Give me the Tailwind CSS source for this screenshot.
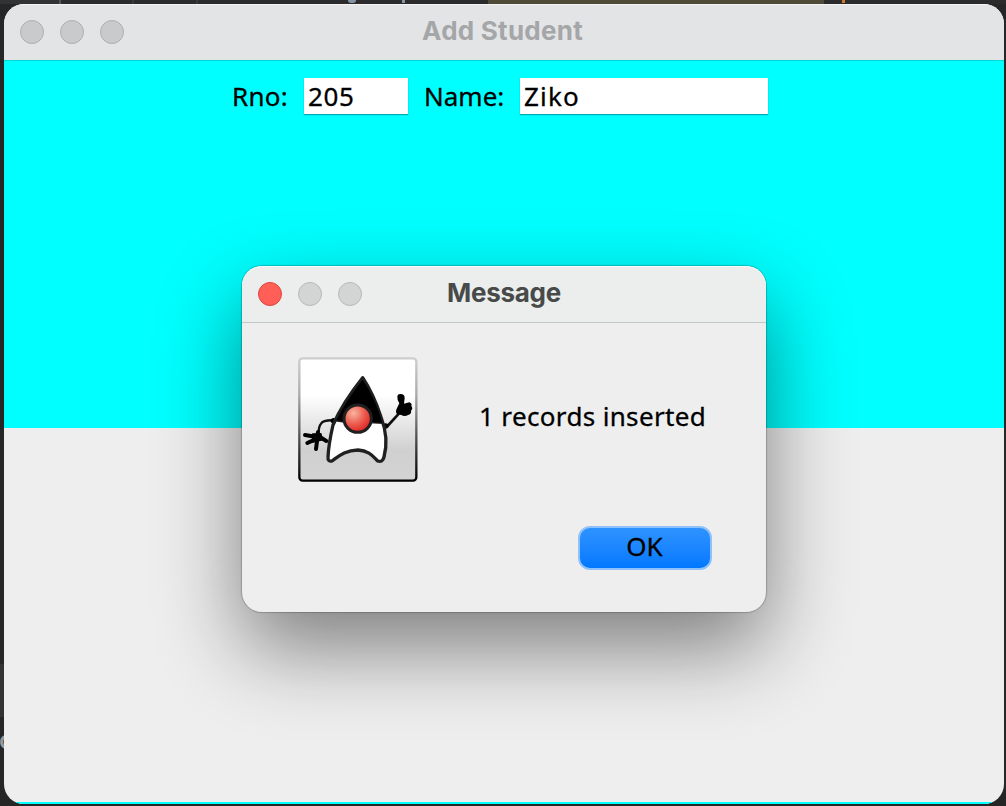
<!DOCTYPE html>
<html lang="en">
<head>
<meta charset="utf-8">
<title>Add Student</title>
<script src="https://cdn.jsdelivr.net/npm/@tailwindcss/browser@4"></script>
</head>
<body class="relative h-[806px] w-[1006px] overflow-hidden bg-[#262626] p-1 font-['Noto_Sans',sans-serif] text-[26px] leading-9 text-black">
  <!-- editor behind the window -->
  <div class="absolute left-0 top-0 flex h-1 w-full bg-[#2b2b2b]">
    <div class="w-[59px] bg-[#313335]"></div><div class="w-[2px] bg-[#555]"></div>
    <div class="w-[71px]"></div><div class="w-[2px] bg-[#393939]"></div>
    <div class="w-[62px]"></div><div class="w-[2px] bg-[#393939]"></div>
    <div class="w-[150px]"></div><div class="h-[3px] w-[8px] rounded-b bg-[#8494a4]"></div>
    <div class="w-[46px]"></div><div class="h-[3px] w-[3px] bg-[#8494a4]"></div>
    <div class="w-[83px]"></div><div class="w-[336px] bg-[#4d4a35]"></div>
    <div class="w-[18px]"></div><div class="h-[3px] w-[3px] bg-[#cc7832]"></div>
  </div>
  <div class="absolute left-0 top-[664px] h-[53px] w-1 bg-[#313335]"></div>
  <div class="absolute -left-px top-[728px] font-['Inter',sans-serif] text-[25px] font-semibold leading-6 text-[#999]">o</div>

  <!-- main window -->
  <div class="relative flex h-[800px] w-[1000px] flex-col overflow-hidden rounded-[20px] bg-[#eeeeee]">
    <div class="relative flex h-14 shrink-0 items-center gap-4 border-t border-[#f5f5f6] bg-[#e3e4e6] pb-px pl-4">
      <div class="size-6 rounded-full border border-[#aeafb0] bg-[#c9cacc]"></div>
      <div class="size-6 rounded-full border border-[#aeafb0] bg-[#c9cacc]"></div>
      <div class="size-6 rounded-full border border-[#aeafb0] bg-[#c9cacc]"></div>
      <div class="absolute inset-x-0 top-2 pr-[3px] text-center font-['Inter',sans-serif] font-bold tracking-[0.25px] text-[#a5a6a8]">Add Student</div>
    </div>
    <div class="flex h-[368px] shrink-0 items-start border-t border-[#00d5d8] bg-[#00ffff] pl-[228px] pt-[17px] [-webkit-text-stroke:0.3px_black]">
      <div class="w-[72px] tracking-[0.3px]">Rno:</div>
      <div class="h-9 w-[104px] bg-white pl-1 tracking-[0.6px] shadow-[0_1px_1px_#00a8b0]">205</div>
      <div class="ml-4 w-24">Name:</div>
      <div class="h-9 w-[248px] bg-white pl-1 tracking-[1.2px] shadow-[0_1px_1px_#00a8b0]">Ziko</div>
    </div>
    <div class="grow"></div>
    <div class="h-[2px] shrink-0 bg-[#00ffff]"></div>

    <!-- message dialog -->
    <div class="absolute left-[238px] top-[262px] h-[346px] w-[524px] rounded-[20px] bg-[#eeeeee] shadow-[0_0_1px_1px_rgba(0,0,0,0.2),0_36px_84px_rgba(0,0,0,0.47)]">
      <div class="relative flex h-[57px] items-center gap-4 rounded-t-[20px] border-b border-t border-b-[#c4c8c8] border-t-[#f8fafa] bg-[#ebeeed] pb-px pl-4">
        <div class="size-6 rounded-full border border-[#e0443e] bg-[#ff5f57]"></div>
        <div class="size-6 rounded-full border border-[#b7b9b8] bg-[#d3d5d4]"></div>
        <div class="size-6 rounded-full border border-[#b7b9b8] bg-[#d3d5d4]"></div>
        <div class="absolute inset-x-0 top-2 text-center font-['Inter',sans-serif] font-bold tracking-[-0.25px] text-[#484a49]">Message</div>
      </div>
      <div class="flex items-start pl-11 pt-[23px]">
        <svg class="h-[146px] w-[144px] shrink-0" viewBox="0 0 432 438">
          <defs>
            <linearGradient id="panel" x1="0" y1="0" x2="0" y2="1"><stop offset="0" stop-color="#fff"/><stop offset=".3" stop-color="#fff"/><stop offset=".75" stop-color="#d0d0d0"/><stop offset="1" stop-color="#d3d3d3"/></linearGradient>
            <linearGradient id="edge" x1="0" y1="0" x2="0" y2="1"><stop offset="0" stop-color="#cecece"/><stop offset=".3" stop-color="#aaa"/><stop offset=".7" stop-color="#444"/><stop offset="1" stop-color="#000"/></linearGradient>
            <radialGradient id="nose" cx=".35" cy=".3" r=".75"><stop offset="0" stop-color="#f8b4a0"/><stop offset=".55" stop-color="#ec5a4e"/><stop offset="1" stop-color="#dc1f20"/></radialGradient>
          </defs>
          <rect x="40" y="37" width="351" height="367" rx="10" fill="url(#panel)" stroke="url(#edge)" stroke-width="7"/>
          <path d="M148 223Q111 221 105 233Q98 241 98 260" fill="none" stroke="#111" stroke-width="7"/>
          <ellipse cx="143" cy="224" rx="9" ry="8"/>
          <path d="M302 243L342 199" stroke="#111" stroke-width="8"/>
          <circle cx="299" cy="240" r="8"/>
          <g fill="none" stroke="#000" stroke-linecap="round" stroke-width="12">
            <path d="M57 267L92 273M64 291L94 277M90 309L94 278M121 285L98 271M96 258L93 275"/>
            <path d="M82 266L103 265L107 280L83 286Z" fill="#000" stroke-width="8"/>
          </g>
          <path d="M334 151Q335 143 344 144Q356 144 356 156L354 173L370 169Q379 173 376 180Q382 188 375 194Q377 203 368 206Q355 213 346 207L334 205Q327 199 332 188L340 172Q333 161 334 151Z"/>
          <path d="M230 95Q170 170 141 237C132 276 127 305 126 335Q125 347 138 345C158 331 176 313 216 312C251 314 262 333 275 345Q290 350 294 333C307 285 298 247 285 213Q262 143 230 95Z" fill="#fff" stroke="#202020" stroke-width="10" stroke-linejoin="round"/>
          <path d="M230 98Q180 160 148 224L183 230H246L292 232Q270 155 230 98Z" stroke="#202020" stroke-width="4"/>
          <circle cx="215" cy="218" r="41" fill="url(#nose)" stroke="#202020" stroke-width="9"/>
        </svg>
        <div class="whitespace-nowrap pl-[49px] pt-[52px] tracking-[0.35px] [-webkit-text-stroke:0.3px_black]">1 records inserted</div>
      </div>
      <div class="flex justify-end pr-[54px] pt-[34px]">
        <div class="h-11 w-[134px] rounded-[12px] border-2 border-[#8fc1fa] bg-linear-to-b from-[#2e93ff] to-[#0078ff] pr-px text-center [-webkit-text-stroke:0.3px_black]">OK</div>
      </div>
    </div>
  </div>
</body>
</html>
